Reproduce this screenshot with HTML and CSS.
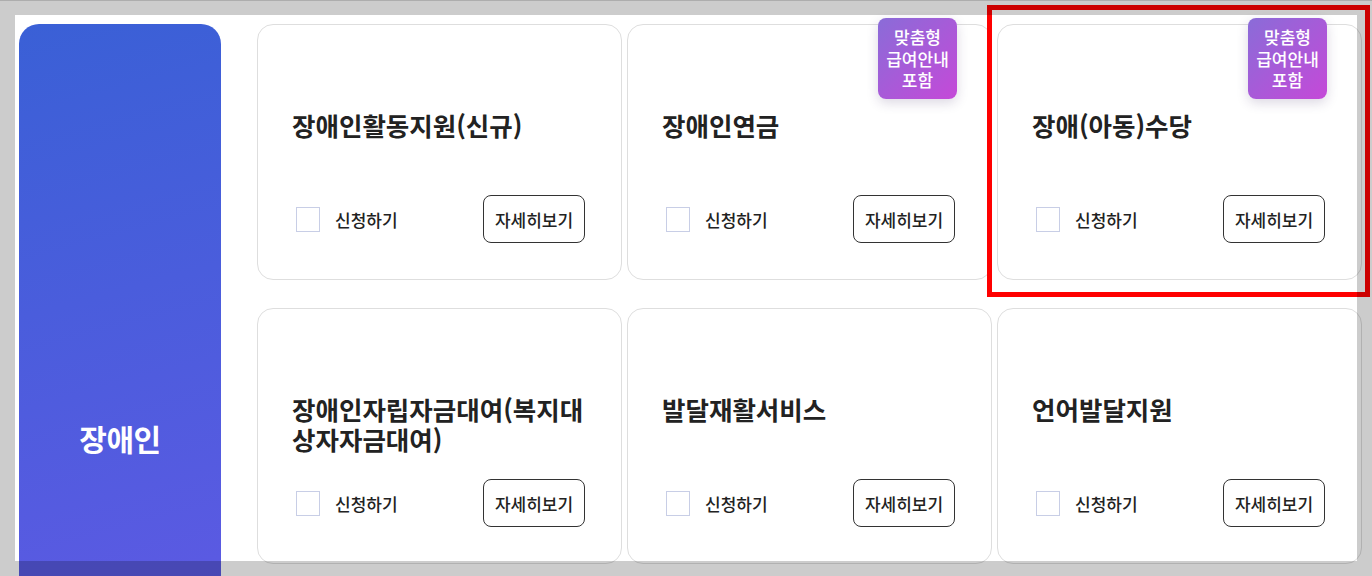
FILE: index.html
```html
<!DOCTYPE html>
<html lang="ko">
<head>
<meta charset="utf-8">
<title>장애인 서비스</title>
<link rel="stylesheet" href="styles.css">
</head>
<body>
<div class="page">
  <aside class="category"><span class="category-name">장애인</span></aside>
  <div class="cards">
    <div class="card">
      <h3 class="card-title">장애인활동지원(신규)</h3>
      <div class="card-actions">
        <label class="apply"><span class="checkbox"></span><span class="apply-text">신청하기</span></label>
        <button class="detail-btn">자세히보기</button>
      </div>
    </div>
    <div class="card">
      <span class="badge">맞춤형<br>급여안내<br>포함</span>
      <h3 class="card-title">장애인연금</h3>
      <div class="card-actions">
        <label class="apply"><span class="checkbox"></span><span class="apply-text">신청하기</span></label>
        <button class="detail-btn">자세히보기</button>
      </div>
    </div>
    <div class="card">
      <span class="badge">맞춤형<br>급여안내<br>포함</span>
      <h3 class="card-title">장애(아동)수당</h3>
      <div class="card-actions">
        <label class="apply"><span class="checkbox"></span><span class="apply-text">신청하기</span></label>
        <button class="detail-btn">자세히보기</button>
      </div>
    </div>
    <div class="card">
      <h3 class="card-title">장애인자립자금대여(복지대상자자금대여)</h3>
      <div class="card-actions">
        <label class="apply"><span class="checkbox"></span><span class="apply-text">신청하기</span></label>
        <button class="detail-btn">자세히보기</button>
      </div>
    </div>
    <div class="card">
      <h3 class="card-title">발달재활서비스</h3>
      <div class="card-actions">
        <label class="apply"><span class="checkbox"></span><span class="apply-text">신청하기</span></label>
        <button class="detail-btn">자세히보기</button>
      </div>
    </div>
    <div class="card">
      <h3 class="card-title">언어발달지원</h3>
      <div class="card-actions">
        <label class="apply"><span class="checkbox"></span><span class="apply-text">신청하기</span></label>
        <button class="detail-btn">자세히보기</button>
      </div>
    </div>
  </div>
</div>
<div class="highlight"></div>
<div class="shade shade-top"></div>
<div class="shade shade-bottom"></div>
<div class="shade shade-left"></div>
<div class="shade shade-right"></div>
</body>
</html>
```

FILE: styles.css
```css
* { box-sizing: border-box; }
html, body {
  margin: 0;
  padding: 0;
  width: 1372px;
  height: 576px;
  overflow: hidden;
  background: #fff;
  font-family: "Noto Sans CJK KR", "Noto Sans", sans-serif;
  color: #222;
}
.page {
  display: flex;
  align-items: flex-start;
  gap: 36px;
  padding: 24px 0 0 19px;
}
.category {
  flex: 0 0 202px;
  height: 828px;
  border-radius: 20px 20px 0 0;
  background: linear-gradient(165deg, #3a60d6 0%, #6a57e8 100%);
  display: flex;
  align-items: center;
  justify-content: center;
}
.category-name {
  color: #fff;
  font-size: 30px;
  font-weight: 700;
  letter-spacing: -0.5px;
}
.cards {
  display: grid;
  grid-template-columns: repeat(3, 365px);
  column-gap: 5px;
  row-gap: 28px;
}
.card {
  position: relative;
  height: 256px;
  border: 1px solid #dedede;
  border-radius: 16px;
  padding: 85px 36px 36px 34px;
  display: flex;
  flex-direction: column;
  background: #fff;
}
.card-title {
  margin: 0;
  font-size: 25.5px;
  line-height: 30px;
  font-weight: 700;
  color: #222;
  letter-spacing: 0;
}
.card-actions {
  margin-top: auto;
  display: flex;
  align-items: center;
  justify-content: space-between;
}
.apply {
  display: flex;
  align-items: center;
  padding-left: 4px;
}
.checkbox {
  width: 24px;
  height: 25px;
  border: 1px solid #c8cee6;
  background: #fff;
}
.apply-text {
  margin-left: 15px;
  font-size: 17px;
  font-weight: 500;
  color: #222;
}
.detail-btn {
  width: 102px;
  height: 48px;
  border: 1px solid #333;
  border-radius: 8px;
  background: #fff;
  font-family: inherit;
  font-size: 17px;
  font-weight: 500;
  color: #222;
  padding: 0;
}
.badge {
  position: absolute;
  top: -7px;
  right: 34px;
  width: 79px;
  height: 81px;
  border-radius: 8px;
  background: linear-gradient(135deg, #8a6cd8 0%, #c549d8 100%);
  box-shadow: 0 4px 12px rgba(60, 40, 100, 0.18);
  color: #fff;
  font-size: 17px;
  font-weight: 500;
  line-height: 21.5px;
  text-align: center;
  display: flex;
  align-items: center;
  justify-content: center;
}
.highlight {
  position: absolute;
  left: 987px;
  top: 5px;
  width: 383px;
  height: 292px;
  border: 5px solid #ff0000;
}
.shade {
  position: absolute;
  background: rgba(0, 0, 0, 0.2);
}
.shade-top { left: 0; top: 0; width: 1372px; height: 15px; border-top: 1px solid rgba(0,0,0,0.15); }
.shade-bottom { left: 0; top: 561px; width: 1372px; height: 15px; }
.shade-left { left: 0; top: 15px; width: 15px; height: 546px; }
.shade-right { left: 1357px; top: 15px; width: 15px; height: 546px; }
```
